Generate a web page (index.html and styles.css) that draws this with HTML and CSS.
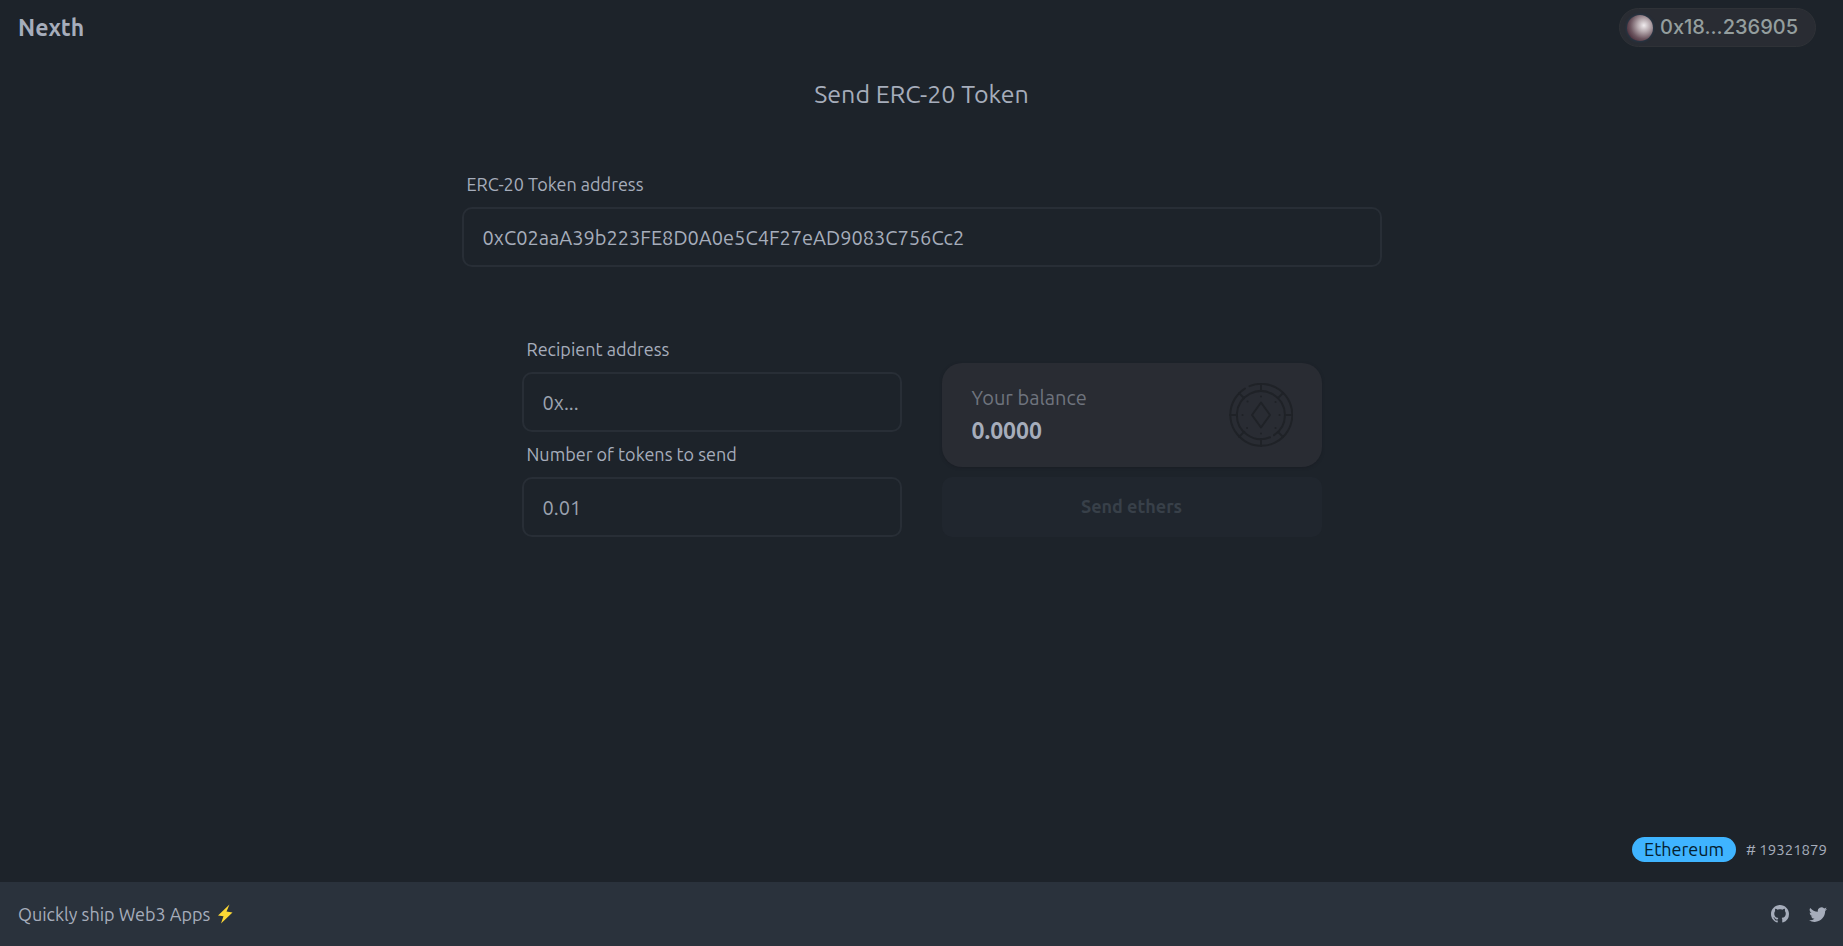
FILE: index.html
```html
<!DOCTYPE html>
<html lang="en">
<head>
<meta charset="utf-8">
<meta name="viewport" content="width=device-width, initial-scale=1">
<title>Nexth</title>
<link rel="stylesheet" href="styles.css">
</head>
<body>
<header class="header">
  <a class="brand" href="#">Nexth</a>
  <button class="wallet" type="button"><span class="avatar"></span>0x18...236905</button>
</header>
<main class="main">
  <h1 class="title">Send ERC-20 Token</h1>
  <div class="field token">
    <label class="label" for="token">ERC-20 Token address</label>
    <input class="input" id="token" type="text" value="0xC02aaA39b223FE8D0A0e5C4F27eAD9083C756Cc2">
  </div>
  <form class="transfer">
    <div class="column">
      <div class="field">
        <label class="label" for="recipient">Recipient address</label>
        <input class="input" id="recipient" type="text" placeholder="0x...">
      </div>
      <div class="field">
        <label class="label" for="amount">Number of tokens to send</label>
        <input class="input" id="amount" type="text" placeholder="0.01">
      </div>
    </div>
    <div class="column actions">
      <div class="card">
        <div>
          <div class="card-title">Your balance</div>
          <div class="card-value">0.0000</div>
        </div>
        <svg class="coin" viewBox="0 0 64 64" fill="none" stroke="currentColor" stroke-width="2" stroke-linecap="round" aria-hidden="true">
          <path d="M20.500 3.200A31 31 0 1 1 16 5.500"/>
          <path d="M41 54.300A24 24 0 1 1 45 52.200"/>
          <path d="M32 1v7M32 56v7M1 32h7M56 32h7M10.100 10.100l5 5M48.900 48.900l5 5M53.900 10.100l-5 5M15.100 48.900l-5 5"/>
          <path d="M32 19.500L41 32L32 44.500L23 32Z" stroke-linejoin="round"/>
          <path d="M32 13.500v.1M32 50.500v.1M13.500 32h.1M50.500 32h.1M18.500 18.500h.1M46.500 19h.1M18 45h.1M46.500 45h.1"/>
        </svg>
      </div>
      <button class="send" type="submit" disabled>Send ethers</button>
    </div>
  </form>
  <div class="network">
    <span class="badge">Ethereum</span>
    <span class="block"># 19321879</span>
  </div>
</main>
<footer class="footer">
  <p class="tagline">Quickly ship Web3 Apps <svg class="bolt" viewBox="0 0 16 20" aria-hidden="true"><path fill="#fdd835" d="M12.500.500L1 11.500l5.500.800L4 19.500L15.500 8.500L9.500 7.600Z"/></svg></p>
  <nav class="social">
    <a href="#" aria-label="GitHub"><svg class="icon" viewBox="0 0 16 16" fill="currentColor"><path d="M8 0C3.580 0 0 3.580 0 8c0 3.540 2.290 6.530 5.470 7.590.4.070.55-.17.55-.38 0-.19-.01-.82-.01-1.490-2.010.37-2.530-.49-2.690-.94-.09-.23-.48-.94-.82-1.130-.28-.15-.68-.52-.01-.53.63-.01 1.080.58 1.230.82.72 1.210 1.870.87 2.330.66.07-.52.28-.87.51-1.070-1.780-.2-3.640-.89-3.640-3.950 0-.87.31-1.590.82-2.150-.08-.2-.36-1.020.08-2.120 0 0 .67-.21 2.200.82.64-.18 1.320-.27 2-.27s1.360.09 2 .27c1.530-1.040 2.200-.82 2.200-.82.44 1.100.16 1.920.08 2.120.51.56.82 1.270.82 2.150 0 3.070-1.870 3.750-3.650 3.950.29.25.54.73.54 1.480 0 1.070-.01 1.930-.01 2.200 0 .21.15.46.55.38A8.010 8.010 0 0 0 16 8c0-4.420-3.580-8-8-8z"/></svg></a>
    <a href="#" aria-label="Twitter"><svg class="icon" viewBox="0 0 16 16" fill="currentColor"><path d="M5.026 15c6.038 0 9.341-5.003 9.341-9.334 0-.14 0-.282-.006-.422A6.685 6.685 0 0 0 16 3.542a6.658 6.658 0 0 1-1.889.518 3.301 3.301 0 0 0 1.447-1.817 6.533 6.533 0 0 1-2.087.793A3.286 3.286 0 0 0 7.875 6.030a9.325 9.325 0 0 1-6.767-3.429 3.289 3.289 0 0 0 1.018 4.382A3.323 3.323 0 0 1 .64 6.575v.045a3.288 3.288 0 0 0 2.632 3.218 3.203 3.203 0 0 1-.865.115 3.230 3.230 0 0 1-.614-.057 3.283 3.283 0 0 0 3.067 2.277A6.588 6.588 0 0 1 .78 13.580a6.320 6.320 0 0 1-.78-.045A9.344 9.344 0 0 0 5.026 15z"/></svg></a>
  </nav>
</footer>
</body>
</html>
```
FILE: styles.css
```css
:root {
  --base: #1d232a;
  --raised: #2a323c;
  --card: #292c33;
  --text: #a6adbb;
}

* {
  box-sizing: border-box;
}

body {
  margin: 0;
  min-height: 100vh;
  display: flex;
  flex-direction: column;
  background: var(--base);
  color: var(--text);
  font-family: Ubuntu, "Noto Sans", sans-serif;
  font-size: 18px;
  line-height: 25px;
}

button,
input {
  font: inherit;
  color: inherit;
}

.header {
  display: flex;
  align-items: center;
  justify-content: space-between;
  height: 55px;
  padding: 0 27px 0 18px;
}

.brand {
  color: inherit;
  font-size: 23px;
  font-weight: 700;
  text-decoration: none;
}

.wallet {
  display: flex;
  align-items: center;
  gap: 7px;
  height: 39px;
  padding: 0 17px 0 7px;
  border: 1px solid #2f3237;
  border-radius: 20px;
  background: #292c33;
  color: #949e9e;
  font-family: Inter, sans-serif;
  font-size: 20px;
  font-weight: 500;
}

.avatar {
  width: 26px;
  height: 26px;
  border-radius: 50%;
  background: radial-gradient(circle at 65% 40%, #f0ecee 0%, #b5a8ad 28%, #6d5660 58%, #3a1c2b 90%);
  box-shadow: 0 0 3px #23415c;
}

.main {
  flex: 1;
  display: flex;
  flex-direction: column;
  align-items: center;
  padding: 22px 16px 20px;
}

.title {
  margin: 0 0 50px;
  font-size: 25px;
  font-weight: 400;
  line-height: 35px;
}

.field {
  display: flex;
  flex-direction: column;
}

.token {
  width: 100%;
  max-width: 920px;
  margin-bottom: 60px;
}

.label {
  padding: 10px 5px;
}

.input {
  width: 100%;
  height: 60px;
  padding: 0 19px;
  border: 2px solid #282e36;
  border-radius: 10px;
  background: var(--base);
  font-size: 20px;
}

.input::placeholder {
  color: #9ba2af;
  opacity: 1;
}

.transfer {
  display: grid;
  grid-template-columns: 1fr 1fr;
  gap: 40px;
  width: 100%;
  max-width: 800px;
}

.actions {
  display: flex;
  flex-direction: column;
  justify-content: flex-end;
  gap: 10px;
}

.card {
  display: flex;
  align-items: center;
  justify-content: space-between;
  height: 104px;
  padding: 0 29px 0 30px;
  border-radius: 20px;
  background: var(--card);
  box-shadow: 0 1px 3px #1a1e25;
}

.card-title {
  color: #6f747e;
  font-size: 20px;
  line-height: 30px;
}

.card-value {
  font-size: 23px;
  font-weight: 700;
  line-height: 35px;
}

.coin {
  width: 64px;
  height: 64px;
  color: #1f2227;
}

.send {
  height: 60px;
  padding: 0 20px 2px;
  border: 0;
  border-radius: 10px;
  background: #20262e;
  color: #384049;
  font-weight: 600;
}

.network {
  display: flex;
  align-items: center;
  align-self: flex-end;
  gap: 10px;
  margin-top: auto;
}

.badge {
  padding: 0 12px;
  border-radius: 13px;
  background: #3fb4ff;
  color: #04202f;
}

.block {
  font-size: 15px;
}

.footer {
  display: flex;
  align-items: center;
  justify-content: space-between;
  height: 64px;
  padding: 0 16px 0 18px;
  background: var(--raised);
}

.tagline {
  display: flex;
  align-items: center;
  gap: 7px;
  margin: 0;
}

.bolt {
  width: 16px;
  height: 20px;
}

.social {
  display: flex;
  gap: 20px;
}

.social a {
  display: flex;
  color: inherit;
}

.icon {
  width: 18px;
  height: 18px;
}
```
